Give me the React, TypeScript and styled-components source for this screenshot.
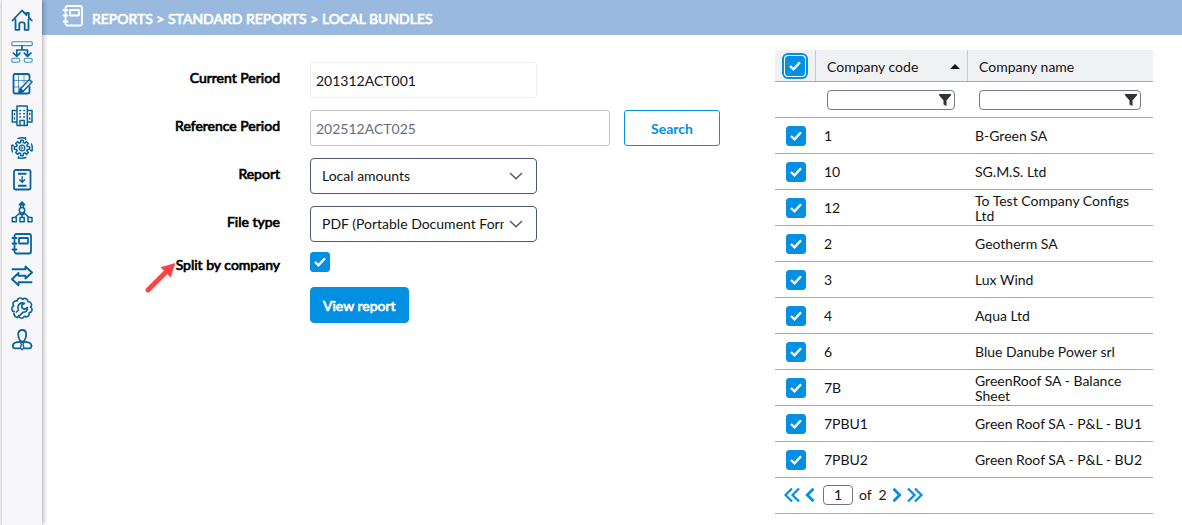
import React, { useState } from "react";
import styled, { createGlobalStyle, css } from "styled-components";

const colors = {
  primary: "#038fe2",
  nav: "#0a639b",
  header: "#99bade",
  border: "#a6a8b8",
  field: "#505a6e",
  text: "#141414",
};

const GlobalStyle = createGlobalStyle`
  *, *::before, *::after { box-sizing: border-box; }
  body {
    margin: 0;
    background: #fff;
    color: ${colors.text};
    font-family: Lato, "Liberation Sans", sans-serif;
    font-size: 14px;
    line-height: 16px;
  }
  button, input, select { font: inherit; color: inherit; }
`;

/* Heavier text that keeps the advance widths of the regular face. */
const emphasis = css`
  font-weight: 400;
  -webkit-text-stroke: 0.05em currentColor;
`;

const Page = styled.div`
  display: flex;
  min-height: 100vh;
`;

const Sidebar = styled.nav`
  position: relative;
  z-index: 1;
  flex: 0 0 41px;
  display: flex;
  flex-direction: column;
  align-items: center;
  gap: 10px;
  margin-left: 1px;
  padding-top: 9px;
  border-left: 1px solid #dcdce0;
  background: #f7f7fa;
  box-shadow: 1px 0 5px rgba(0, 0, 0, 0.35);
`;

const NavLink = styled.a`
  display: block;
  width: 22px;
  height: 22px;
  color: ${colors.nav};
`;

const Icon = styled.svg<{ $stroke?: number }>`
  display: block;
  width: 22px;
  height: 22px;
  fill: none;
  stroke: currentColor;
  stroke-width: ${(p) => p.$stroke ?? 1.8};
  stroke-linejoin: round;
  stroke-linecap: round;
`;

const Main = styled.main`
  flex: 1;
  min-width: 0;
`;

const TitleBar = styled.header`
  display: flex;
  align-items: center;
  gap: 8px;
  height: 35px;
  padding: 0 20px 4px;
  background: ${colors.header};
  color: #fff;
`;

const Title = styled.h1`
  margin: 0;
  padding-top: 7px;
  font-size: 14px;
  line-height: 16px;
  ${emphasis}
`;

const Content = styled.div`
  display: flex;
  justify-content: space-between;
  align-items: flex-start;
  gap: 32px;
  padding: 15px 29px 11px 72px;
`;

const Form = styled.form`
  flex: 0 1 auto;
  display: grid;
  grid-template-columns: 166px minmax(0, auto);
  column-gap: 30px;
  row-gap: 12px;
  padding-top: 12px;
`;

const Label = styled.label<{ $compact?: boolean }>`
  position: relative;
  justify-self: end;
  padding-top: ${(p) => (p.$compact ? 3 : 8)}px;
  color: #000;
  white-space: nowrap;
  ${emphasis}
`;

const Field = styled.div`
  display: flex;
  gap: 14px;
`;

const TextInput = styled.input<{ $wide?: boolean }>`
  width: ${(p) => (p.$wide ? 300 : 227)}px;
  min-width: 0;
  height: 36px;
  padding: 1px 5px 0;
  border: 1px solid ${(p) => (p.$wide ? "#c3c5cf" : "#eeeef0")};
  border-radius: 3px;
  background: #fff;
  color: ${(p) => (p.$wide ? "#666c7a" : colors.text)};
`;

const SelectBox = styled.div`
  display: grid;
  align-items: center;
  width: 227px;
  > * { grid-area: 1 / 1; }
  > svg {
    justify-self: end;
    margin-right: 14px;
    width: 14px;
    height: 14px;
    color: ${colors.field};
    pointer-events: none;
  }
`;

const Select = styled.select`
  appearance: none;
  width: 100%;
  height: 36px;
  padding: 0 32px 0 11px;
  border: 1px solid ${colors.field};
  border-radius: 4px;
  background: #fff;
`;

const Button = styled.button<{ $solid?: boolean }>`
  height: 36px;
  padding: 2px ${(p) => (p.$solid ? 12 : 26)}px 0;
  border: 1px solid ${colors.primary};
  border-radius: ${(p) => (p.$solid ? 4 : 3)}px;
  background: ${(p) => (p.$solid ? colors.primary : "#fff")};
  color: ${(p) => (p.$solid ? "#fff" : colors.primary)};
  white-space: nowrap;
  cursor: pointer;
  ${(p) => (p.$solid ? emphasis : "font-weight: 700;")}
`;

const CheckRow = styled(Field)`
  padding: 0 0 3px;
  margin-top: -2px;
`;

const Tick = styled.span<{ $ring?: boolean }>`
  display: inline-grid;
  vertical-align: top;
  > * { grid-area: 1 / 1; }
  input {
    appearance: none;
    width: 20px;
    height: 20px;
    margin: 0;
    border: 1px solid ${colors.primary};
    border-radius: 3px;
    background: #fff;
    ${(p) =>
      p.$ring &&
      css`
        box-shadow: 0 0 0 1px #fff, 0 0 0 3px ${colors.primary};
      `}
  }
  input:checked { background: ${colors.primary}; }
  svg {
    width: 20px;
    height: 20px;
    fill: none;
    stroke: #fff;
    stroke-width: 2.4;
    pointer-events: none;
  }
`;

const Pointer = styled.svg`
  position: absolute;
  right: 103px;
  top: 5px;
  width: 34px;
  height: 34px;
`;

const Panel = styled.section`
  flex: 0 0 378px;
`;

const Grid = styled.table`
  width: 100%;
  table-layout: fixed;
  border-collapse: separate;
  border-spacing: 0;
`;

const TickCol = styled.col`
  width: 40px;
`;

const CodeCol = styled.col`
  width: 152px;
`;

const HeadCell = styled.th<{ $divided?: boolean }>`
  height: 32px;
  padding: ${(p) => (p.$divided ? "2px 7px 0 11px" : "0")};
  border-bottom: 1px solid ${colors.border};
  border-left: ${(p) => (p.$divided ? "1px solid #c6c8d0" : "0")};
  background: #f0f1f3;
  font-weight: 400;
  text-align: ${(p) => (p.$divided ? "left" : "center")};
`;

const HeadLabel = styled.div`
  display: flex;
  align-items: center;
  justify-content: space-between;
`;

const cellPadding = {
  tick: "0 0 0 11px",
  filter: "0 12px",
  code: "0 6px 0 9px",
  name: "0 6px 0 8px",
};

const Cell = styled.td<{ $kind: keyof typeof cellPadding }>`
  height: 36px;
  padding: ${(p) => cellPadding[p.$kind]};
  border-bottom: 1px solid ${colors.border};
  line-height: 15px;
  vertical-align: middle;
`;

const FilterBox = styled.div`
  display: grid;
  align-items: center;
  > * { grid-area: 1 / 1; }
  input {
    width: 100%;
    height: 20px;
    padding: 0 24px 0 6px;
    border: 1px solid #737a90;
    border-radius: 4px;
    background: #fff;
  }
  svg {
    justify-self: end;
    margin-right: 4px;
    width: 12px;
    height: 12px;
    fill: #333;
    pointer-events: none;
  }
`;

const Pager = styled.div`
  display: flex;
  align-items: center;
  height: 36px;
  padding: 0 0 2px 9px;
  border-bottom: 1px solid ${colors.border};
  input {
    width: 30px;
    height: 20px;
    margin: 0 6px 0 8px;
    padding: 0;
    border: 1px solid #6f7688;
    border-radius: 4px;
    background: #fff;
    text-align: center;
  }
`;

const PageButton = styled.button<{ $gap?: number }>`
  margin: 0 0 0 ${(p) => p.$gap ?? 0}px;
  padding: 0;
  border: 0;
  background: none;
  color: ${colors.primary};
  cursor: pointer;
  svg {
    display: block;
    height: 16px;
    fill: none;
    stroke: currentColor;
  }
`;

const Notebook = () => (
  <Icon viewBox="0 0 22 22">
    <rect x="3.5" y="1" width="16.5" height="19.5" rx="2" />
    <rect x="8" y="5" width="9" height="5.5" rx="0.5" />
    <path d="M1.5 5h4M1.5 10.5h4M1.5 16.5h4" />
  </Icon>
);

const polar = (cx: number, cy: number, r: number, a: number) =>
  `${(cx + Math.sin(a) * r).toFixed(2)} ${(cy - Math.cos(a) * r).toFixed(2)}`;

const gearPath = (cx: number, cy: number, outer: number, inner: number, teeth: number) => {
  const pts: string[] = [];
  for (let i = 0; i < teeth; i++) {
    [
      [-0.32, inner],
      [-0.2, outer],
      [0.2, outer],
      [0.32, inner],
    ].forEach(([offset, r]) => pts.push(polar(cx, cy, r, ((i + offset) / teeth) * Math.PI * 2)));
  }
  return `M${pts.join("L")}Z`;
};

/* Open ring of rounded lobes; the gap at the lower left is where the wrench handle leaves. */
const lobePath = (cx: number, cy: number, r: number, lobes: number, gapAt: number) => {
  const at = (i: number) => polar(cx, cy, r, ((i + gapAt + 0.5) / lobes) * Math.PI * 2);
  let d = `M${at(0)}`;
  for (let i = 1; i < lobes; i++) d += `A3.1 3.1 0 0 1 ${at(i)}`;
  return d;
};

const navItems: { name: string; icon: React.ReactNode }[] = [
  {
    name: "Home",
    icon: (
      <Icon viewBox="0 0 22 22">
        <path d="M1.5 11.5 11 1.500 15.500 6V4H17.800V8.300L20.800 11.500M4.500 10.500V20.800H8.300V15Q8.300 13.300 10 13.300H12Q13.700 13.300 13.700 15V20.800H17.500V10.500" />
      </Icon>
    ),
  },
  {
    name: "Structure",
    icon: (
      <Icon viewBox="0 0 22 22">
        <g strokeWidth="1.1" stroke="#3d8dbb">
          <rect x="0.800" y="0.800" width="20.500" height="3.800" rx="1.200" />
          <rect x="0.800" y="17.300" width="8" height="4" rx="1.800" />
          <rect x="13.200" y="17.300" width="8" height="4" rx="1.800" />
        </g>
        <path d="M11 4.500V9M5.800 15V9H16.500V15M2.300 12 5.800 15.500 9 12M13.200 12 16.500 15.500 20 12" strokeWidth="1.700" />
      </Icon>
    ),
  },
  {
    name: "Data entry",
    icon: (
      <Icon viewBox="0 0 22 22">
        <path d="M18.500 5V3Q18.500 1 16.500 1H4Q2.500 1 2.500 3V18.500Q2.500 20.500 4 20.500H16.500Q18.500 20.500 18.500 18.500V14" />
        <path d="M2.500 7.500H16M2.500 14H10M7.500 1V20M13 1V10" strokeWidth="0.600" />
        <path d="M8.500 19.500 9.300 16 18.300 6.500 21 9 12 18.500Z" fill="#f7f7fa" strokeWidth="1.500" />
        <path d="M8.500 19.500 9.300 16 12 18.500Z" fill="currentColor" />
      </Icon>
    ),
  },
  {
    name: "Companies",
    icon: (
      <Icon viewBox="0 0 22 22" $stroke={1.5}>
        <path d="M6 20.500V1H16.300V20.500ZM6 5.500H1.300V17H6M16.300 5.500H21V17H16.300M9 20.500V15.500H13.300V20.500" />
        <path d="M8.800 5.500H9.500M12.800 5.500H13.500M8.800 8.700H9.500M12.800 8.700H13.500M8.800 12H9.500M12.800 12H13.500M3.500 8.500V9.500M3.500 13V14M18.700 8.500V9.500M18.700 13V14" />
      </Icon>
    ),
  },
  {
    name: "Process",
    icon: (
      <Icon viewBox="0 0 22 22">
        <path d={gearPath(11, 11, 7.8, 5.6, 8)} strokeWidth="1.500" />
        <circle cx="11" cy="11" r="2.900" strokeWidth="1.200" />
        <path d="M10.300 9.700 12.300 11 10.300 12.300Z" strokeWidth="0.800" />
        <path d="M7 1.500Q11 0 14.500 1.300M14.500 0.500V2.500M20.500 7Q22 11 20.700 14M19.500 13.500H21.500M15 20.500Q11 22 7.500 20.700M7.500 19.500V21.500M1.500 15Q0 11 1.300 8M0.500 8.500H2.500" strokeWidth="1.400" />
      </Icon>
    ),
  },
  {
    name: "Import",
    icon: (
      <Icon viewBox="0 0 22 22">
        <rect x="3" y="1" width="16.500" height="19.500" rx="1.800" />
        <path d="M7 4.800H15.500M7 16.800H15.500" strokeLinecap="butt" strokeWidth="2" />
        <path d="M11.200 7.800V13M8.700 10.700 11.200 13.200 13.700 10.700" strokeWidth="1.400" />
      </Icon>
    ),
  },
  {
    name: "Consolidation",
    icon: (
      <Icon viewBox="0 0 22 22" $stroke={1.5}>
        <path d="M8.300 3.800 11 1 13.700 3.800M9.700 3.800V6.500M12.300 3.800V6.500M8.300 3.800H13.700M9.300 11.500 4.500 16M12.700 11.500 17.500 16M9.800 11.800 9.300 13.500H12.700L12.200 11.800M11 13.500V16.300" />
        <circle cx="11" cy="9.200" r="2.700" />
        <path d="M1.300 16.500H5.300V20.700H1.300ZM9 16.500H13.200V20.700H9ZM17 16.500H21V20.700H17Z" />
      </Icon>
    ),
  },
  { name: "Reports", icon: <Notebook /> },
  {
    name: "Transfers",
    icon: (
      <Icon viewBox="0 0 22 22" $stroke={1.9}>
        <path d="M1.500 4.300H14.500V1.500L21 7.500 14.500 13.500V10.700H7.500M20.500 17.300H7.500V20.300L1 14.200 7.500 8V10.700" />
      </Icon>
    ),
  },
  {
    name: "Settings",
    icon: (
      <Icon viewBox="0 0 22 22" $stroke={1.6}>
        <path d={lobePath(11, 11, 8.6, 9, 5.6)} />
        <path d="M2.800 16.500Q3.500 20 6.500 20.500L12 15.300Q16.500 15.300 16.500 10.500L13.500 12.300 10.800 10.800V8L13.500 6.300Q8.500 4.800 7 9.500 6.500 11.500 7.500 13L5.500 15" />
      </Icon>
    ),
  },
  {
    name: "Users",
    icon: (
      <Icon viewBox="0 0 22 22">
        <path d="M7.200 5.500Q7.200 1 11.200 1T15.200 5.500Q15.200 9.500 13 12.300H9.400Q7.200 9.500 7.200 5.500Z" />
        <path d="M9.200 12.800Q2 13 1.800 16.500 1.800 19.300 4 19.300H8.800M13.200 12.800Q20.300 13 20.500 16.500 20.500 19.300 18.300 19.300H13.600" />
        <path d="M9.400 13.500H13L12 15.500 13 19 11.200 20.800 9.400 19 10.400 15.500Z" strokeWidth="1.300" />
      </Icon>
    ),
  },
];

const Chevron = () => (
  <Icon viewBox="0 0 14 14" $stroke={1.5} aria-hidden>
    <path d="M1.500 4.500 7 9.800 12.500 4.500" />
  </Icon>
);

const Funnel = () => (
  <svg viewBox="0 0 12 12" aria-hidden>
    <path d="M0 0H12V1.300L7.500 6.500V12L4.500 10.500V6.500L0 1.300Z" />
  </svg>
);

function CheckBox({ id, label, ring }: { id?: string; label?: string; ring?: boolean }) {
  return (
    <Tick $ring={ring}>
      <input id={id} type="checkbox" defaultChecked aria-label={label} />
      <svg viewBox="0 0 20 20" aria-hidden>
        <path d="M5 10 8.500 13.300 15 6.300" />
      </svg>
    </Tick>
  );
}

const companies = [
  ["1", "B-Green SA"],
  ["10", "SG.M.S. Ltd"],
  ["12", "To Test Company Configs Ltd"],
  ["2", "Geotherm SA"],
  ["3", "Lux Wind"],
  ["4", "Aqua Ltd"],
  ["6", "Blue Danube Power srl"],
  ["7B", "GreenRoof SA - Balance Sheet"],
  ["7PBU1", "Green Roof SA - P&L - BU1"],
  ["7PBU2", "Green Roof SA - P&L - BU2"],
];

function PageArrow({ label, double, flip, gap }: { label: string; double?: boolean; flip?: boolean; gap?: number }) {
  const w = double ? 16 : 10;
  return (
    <PageButton type="button" aria-label={label} $gap={gap}>
      <svg width={w} height="16" viewBox={`0 0 ${w} 16`}>
        <g transform={flip ? `translate(${w} 0) scale(-1 1)` : undefined}>
          {double ? (
            <path d="M8 1.500 1.500 8 8 14.500M15 1.500 8.500 8 15 14.500" strokeWidth="2.200" />
          ) : (
            <path d="M8.500 1.800 2.300 8 8.500 14.200" strokeWidth="2.800" />
          )}
        </g>
      </svg>
    </PageButton>
  );
}

export default function App() {
  const [page, setPage] = useState("1");
  return (
    <Page>
      <GlobalStyle />
      <Sidebar aria-label="Main">
        {navItems.map((item) => (
          <NavLink key={item.name} href="#" aria-label={item.name}>
            {item.icon}
          </NavLink>
        ))}
      </Sidebar>
      <Main>
        <TitleBar>
          <Notebook />
          <Title>REPORTS &gt; STANDARD REPORTS &gt; LOCAL BUNDLES</Title>
        </TitleBar>
        <Content>
          <Form onSubmit={(e) => e.preventDefault()}>
            <Label htmlFor="current">Current Period</Label>
            <Field>
              <TextInput id="current" defaultValue="201312ACT001" readOnly />
            </Field>
            <Label htmlFor="reference">Reference Period</Label>
            <Field>
              <TextInput id="reference" $wide defaultValue="202512ACT025" />
              <Button type="button">Search</Button>
            </Field>
            <Label htmlFor="report">Report</Label>
            <SelectBox>
              <Select id="report">
                <option>Local amounts</option>
              </Select>
              <Chevron />
            </SelectBox>
            <Label htmlFor="filetype">File type</Label>
            <SelectBox>
              <Select id="filetype">
                <option>PDF (Portable Document Format)</option>
              </Select>
              <Chevron />
            </SelectBox>
            <Label htmlFor="split" $compact>
              Split by company
              <Pointer viewBox="0 0 34 34" aria-hidden>
                <path d="M5 31 22 14" stroke="#fb4545" strokeWidth="4.800" strokeLinecap="round" />
                <path d="M32.300 4 17.500 8.300 27.700 18.500Z" fill="#fb4545" />
              </Pointer>
            </Label>
            <CheckRow>
              <CheckBox id="split" />
            </CheckRow>
            <span />
            <Field>
              <Button $solid>View report</Button>
            </Field>
          </Form>
          <Panel>
            <Grid>
              <colgroup>
                <TickCol />
                <CodeCol />
                <col />
              </colgroup>
              <thead>
                <tr>
                  <HeadCell>
                    <CheckBox label="Select all companies" ring />
                  </HeadCell>
                  <HeadCell $divided>
                    <HeadLabel>
                      Company code
                      <svg width="10" height="5" viewBox="0 0 10 5" aria-hidden>
                        <path d="M0 5 5 0 10 5Z" fill="#111" />
                      </svg>
                    </HeadLabel>
                  </HeadCell>
                  <HeadCell $divided>Company name</HeadCell>
                </tr>
              </thead>
              <tbody>
                <tr>
                  <Cell $kind="tick" />
                  <Cell $kind="filter">
                    <FilterBox>
                      <input aria-label="Filter company code" />
                      <Funnel />
                    </FilterBox>
                  </Cell>
                  <Cell $kind="filter">
                    <FilterBox>
                      <input aria-label="Filter company name" />
                      <Funnel />
                    </FilterBox>
                  </Cell>
                </tr>
                {companies.map(([code, name]) => (
                  <tr key={code}>
                    <Cell $kind="tick">
                      <CheckBox label={`Select ${name}`} />
                    </Cell>
                    <Cell $kind="code">{code}</Cell>
                    <Cell $kind="name">{name}</Cell>
                  </tr>
                ))}
              </tbody>
            </Grid>
            <Pager>
              <PageArrow label="First page" double />
              <PageArrow label="Previous page" gap={5} />
              <input aria-label="Page" value={page} onChange={(e) => setPage(e.target.value)} />
              <span>of&nbsp; 2</span>
              <PageArrow label="Next page" flip gap={5} />
              <PageArrow label="Last page" double flip gap={5} />
            </Pager>
          </Panel>
        </Content>
      </Main>
    </Page>
  );
}
